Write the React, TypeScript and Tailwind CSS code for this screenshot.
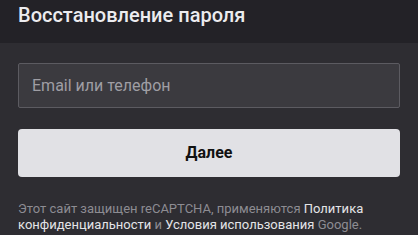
export default function App() {
  return (
    <div className="w-[418px] h-[235px] overflow-hidden bg-[#2e2d32] font-['Roboto',sans-serif]">
      <header className="h-[43px] bg-[#232227] px-[18px] pt-[5px]">
        <h1 className="text-[20px] font-medium text-[#ececef] leading-none">Восстановление пароля</h1>
      </header>

      <div className="px-[18px] pt-[20px]">
        <div className="h-[45px] bg-[#3b3a3f] border border-[#5c5b61] rounded-[2px] flex items-center px-[13px]">
          <span className="text-[16px] text-[#9f9ea4]">Email или телефон</span>
        </div>

        <button className="mt-[21px] w-full h-[48px] bg-[#e1e1e5] rounded-[4px] flex items-center justify-center text-[16px] font-bold text-[#111]">
          Далее
        </button>

        <p className="mt-[24px] text-[13px] leading-[16px] text-[#8d8c92]">
          Этот сайт защищен reCAPTCHA, применяются{" "}
          <span className="text-[#e4e4e7]">Политика конфиденциальности</span> и{" "}
          <span className="text-[#e4e4e7]">Условия использования</span> Google.
        </p>
      </div>
    </div>
  )
}
